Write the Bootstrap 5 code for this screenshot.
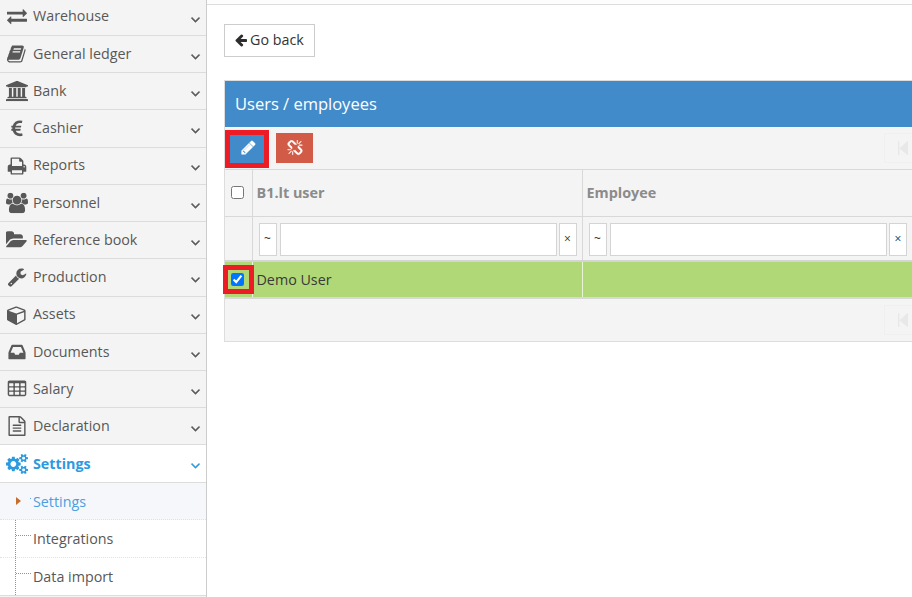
<!DOCTYPE html>
<html lang="en">
<head>
<meta charset="utf-8">
<title>Users / employees</title>
<link href="https://cdn.jsdelivr.net/npm/bootstrap@5.3.0/dist/css/bootstrap.min.css" rel="stylesheet">
<style>
html,body{height:597px;overflow:hidden}
body{font-family:"Open Sans",sans-serif;font-size:14.3px;color:#393939;background:#fff;line-height:20px}
.shell{height:597px;width:912px;overflow:hidden}
.side{width:207px;flex:none;background:#f4f4f4;border-right:1px solid #ccc;height:597px;overflow:hidden}
.mi{height:37.23px;border-bottom:1px solid #dcdcdc;color:#585858;padding-left:33px;padding-right:3px;padding-bottom:.7px;position:relative}
.mi.first{height:36px;padding-bottom:3px}
.mi>.mico{position:absolute;left:7px;top:50%;transform:translateY(-50%);width:20px;height:20px;fill:#585858}
.mi>.mico.wide{left:5.500px;width:22px;height:21px}
.mi.first>.mico{top:calc(50% - 2px)}
.mi>.chev{width:15px;height:15px;fill:#585858;stroke:#585858;stroke-width:70;margin-top:5px}
.mi.first>.chev{margin-top:7px}
.mi.on{background:#fff;color:#2c9ae0;font-weight:700;padding-bottom:0}
.mi.on>.mico,.mi.on>.chev{fill:#2c9ae0;stroke:#2c9ae0}
.mi.on>.chev{margin-top:4px}
.mi.on>.mico{stroke:none}
.sub{background:#fff;position:relative;border-bottom:1px solid #dcdcdc}
.sub::before{content:"";position:absolute;left:15px;top:0;bottom:0;border-left:1px dotted #5d9fd8}
.si{height:37.5px;padding-left:33px;padding-top:2px;color:#585858;position:relative;border-bottom:1px dotted #e2e2e2}
.si:last-child{border-bottom:0;padding-top:1px}
.si::before{content:"";position:absolute;left:16px;width:15px;top:15px;border-top:1px dotted #5d9fd8}
.si.cur{background:#f5f7fa;color:#4b9fe0}
.si.cur::before{left:30px;width:1px}
.si.cur::after{content:"";position:absolute;left:16px;top:14px;border-left:5px solid #c86c2b;border-top:4.500px solid transparent;border-bottom:4.500px solid transparent}
.pane{min-width:0;overflow:hidden}
.topline{height:5px;border-bottom:1px solid #ddd;background:#fdfdfd}
.backbtn{margin:19px 0 23px 17px;width:91px;height:33px;border:1px solid #ccc;border-radius:0;padding:0 0 2px 9px;font-size:14.3px;color:#333;background:#fff;font-family:inherit;text-align:left}
.backbtn svg{width:14px;height:14px;fill:#2d2d2d;margin:-2px 2px 0 0}
.grid-panel{margin-left:17px;width:700px;border:1px solid #ddd;background:#f4f4f4}
.ptitle{background:#428bca;height:46px;line-height:46px;color:#fff;font-size:16.500px;padding-left:10px;width:688px}
.tools{height:43px;width:688px;border-bottom:1px solid #d8d8d8;padding-left:5px;gap:12px}
.tb{width:34px;height:28px;border:0;border-radius:0;padding:0;margin-top:8px}
.tb svg{width:16px;height:16px;fill:#fff;stroke:#fff;stroke-width:50}
.tb-edit{background:#428bca;outline:5px solid #ed1c24}
.tb-edit svg{transform:translate(1.500px,-1.500px)}
.tb-unlink{background:#d15b47;width:37px;height:30px;margin-top:6px;margin-left:0}
.pg{width:29px;height:30px;border:1px solid #f0f0f0;margin-left:auto;padding-left:13px}
.tools .pg{margin-top:6px}
.pg svg{width:10px;height:14px;fill:#e8e8e8;margin-top:7px;display:block}
.grid-table{table-layout:fixed;width:688px;margin:0;border-collapse:collapse;--bs-table-bg:transparent}
.grid-table td,.grid-table th{border:0 solid #d8d8d8;border-right-width:1px;border-bottom-width:1px;padding:0;box-shadow:none;background:transparent;vertical-align:middle}
.grid-table th{color:#8b8b8b;font-weight:700;font-size:14.4px;padding-left:4px;height:46px;padding-right:0}
.grid-table .ck{padding:0;text-align:center}
.grid-table input[type=checkbox]{display:block;margin:0 0 0 6px;width:13px;height:13px}
.grid-table .fr td{height:45px;border-bottom:2px solid #d4d4d4;padding:2px 5px 0 6px}
.fbox{width:18px;height:33px;flex:none;background:#fff;border:1px solid #d4d4d4;font-size:12px;color:#333;line-height:30px;text-align:center}
.finput{height:33px;border:1px solid #d4d4d4;border-radius:0;padding:0;flex:1 1 0;min-width:0;margin-right:-1px}
.fgap{gap:3px}
.grid-table .dr td{background:#b0d877;height:37px;border-right-color:#e8f3d8;border-bottom:2px solid #d8d8d8;color:#393939;padding-left:4px;font-size:14.3px}
.grid-table .dr td.ck{padding:0;position:relative}
.redmark{position:absolute;left:-2px;top:3px;width:31px;height:29px;border:5px solid #ed1c24;pointer-events:none}
.dr .ck input{position:relative}
.pfoot{height:42px;padding-top:6px;width:688px}
</style>
</head>
<body>
<svg width="0" height="0" class="d-none">
<symbol id="i-ex" viewBox="0 0 1792 1792"><path d="M1792 1184v192q0 13-9.500 22.500t-22.500 9.500h-1376v192q0 13-9.500 22.500t-22.500 9.500q-12 0-24-10l-319-320q-9-9-9-22 0-14 9-23l320-320q9-9 23-9 13 0 22.500 9.500t9.500 22.500v192h1376q13 0 22.500 9.500t9.500 22.500zm0-544q0 14-9 23l-320 320q-9 9-23 9-13 0-22.500-9.500t-9.500-22.500v-192h-1376q-13 0-22.500-9.500t-9.500-22.500v-192q0-13 9.500-22.500t22.500-9.500h1376v-192q0-14 9-23t23-9q12 0 24 10l319 319q9 9 9 23z"/></symbol>
<symbol id="i-book" viewBox="0 0 1792 1792"><path d="M1639 478q40 57 18 129l-275 906q-19 64-76.500 107.500t-122.500 43.500h-923q-77 0-148.500-53.500t-99.500-131.500q-24-67-2-127 0-4 3-27t4-37q1-8-3-21.500t-3-19.500q2-11 8-21t16.500-23.500 16.500-23.500q23-38 45-91.500t30-91.500q3-10 .5-30t-.5-28q3-11 17-28t17-23q21-36 42-92t25-90q1-9-2.500-32t.5-28q4-13 22-30.500t22-22.500q19-26 42.500-84.500t27.500-96.500q1-8-3-25.500t-2-26.500q2-8 9-18t18-23 17-21q8-12 16.500-30.500t15-35 16-36 19.500-32 26.500-23.500 36-11.500 47.500 5.500l-1 3q38-9 51-9h761q74 0 114 56t18 130l-274 906q-36 119-71.500 153.500t-128.500 34.500h-869q-27 0-38 15-11 16-1 43 24 70 144 70h923q29 0 56-15.500t35-41.500l300-987q7-22 5-57 38 15 59 43zm-1064 2q-4 13 2 22.500t20 9.500h608q13 0 25.500-9.500t16.500-22.500l21-64q4-13-2-22.500t-20-9.500h-608q-13 0-25.500 9.500t-16.500 22.500zm-83 256q-4 13 2 22.500t20 9.500h608q13 0 25.500-9.500t16.500-22.500l21-64q4-13-2-22.500t-20-9.500h-608q-13 0-25.500 9.500t-16.500 22.500z"/></symbol>
<symbol id="i-bank" viewBox="0 0 1920 1792"><path d="M960 0l960 384v128h-128q0 26-20.500 45t-48.500 19h-1526q-28 0-48.500-19t-20.500-45h-128v-128zm-704 640h256v768h128v-768h256v768h128v-768h256v768h128v-768h256v768h59q28 0 48.500 19t20.500 45v64h-1664v-64q0-26 20.500-45t48.500-19h59v-768zm1595 960q28 0 48.500 19t20.500 45v128h-1920v-128q0-26 20.500-45t48.500-19h1782z"/></symbol>
<symbol id="i-eur" viewBox="0 0 1792 1792"><path d="M1360 1307l35 159q3 12-3 22.500t-17 14.500l-5 1q-4 2-10.500 3.500t-16 4.500-21.500 5.500-25.500 5-30 5-33.500 4.500-36.500 3-38.500 1q-234 0-409-130.500t-238-351.500h-95q-13 0-22.500-9.500t-9.500-22.500v-113q0-13 9.500-22.500t22.500-9.500h66q-2-57 1-105h-67q-14 0-23-9t-9-23v-114q0-14 9-23t23-9h98q67-210 243.500-338t400.500-128q102 0 194 23 11 3 20 15 6 11 3 24l-43 159q-3 13-14 19.500t-24 2.500l-4-1q-4-1-11.500-2.500l-17.500-3.500-22.500-3.500-26-3-29-2.500-29.500-1q-126 0-226 64t-150 176h468q16 0 25 12 10 12 7 26l-24 114q-5 26-32 26h-488q-3 37 0 105h459q15 0 25 12 9 12 6 27l-24 112q-2 11-11 18.500t-20 7.500h-387q48 117 149.500 185.500t228.500 68.500q18 0 36-1.500t33.500-3.500 29.500-4.500 24.500-5 18.500-4.500l12-3 5-2q13-5 26 2 12 7 15 21z"/></symbol>
<symbol id="i-print" viewBox="0 0 1792 1792"><path d="M448 1536h896v-256h-896v256zm0-640h896v-384h-160q-40 0-68-28t-28-68v-160h-640v640zm1152 64q0-26-19-45t-45-19-45 19-19 45 19 45 45 19 45-19 19-45zm128 0v416q0 13-9.500 22.500t-22.500 9.500h-224v160q0 40-28 68t-68 28h-960q-40 0-68-28t-28-68v-160h-224q-13 0-22.500-9.500t-9.500-22.500v-416q0-79 56.500-135.500t135.500-56.500h64v-544q0-40 28-68t68-28h672q40 0 88 20t76 48l152 152q28 28 48 76t20 88v256h64q79 0 135.500 56.500t56.500 135.500z"/></symbol>
<symbol id="i-users" viewBox="0 0 1920 1792"><path d="M593 896q-162 5-265 128h-134q-82 0-138-40.500t-56-118.500q0-353 124-353 6 0 43.500 21t97.500 42.500 119 21.500q67 0 133-23-5 37-5 66 0 139 81 256zm1071 637q0 120-73 189.500t-194 69.500h-874q-121 0-194-69.500t-73-189.500q0-53 3.500-103.500t14-109 26.500-108.500 43-97.500 62-81 85.500-53.500 111.500-20q10 0 43 21.500t73 48 107 48 135 21.500 135-21.500 107-48 73-48 43-21.500q61 0 111.500 20t85.500 53.500 62 81 43 97.500 26.500 108.500 14 109 3.500 103.500zm-1024-1277q0 106-75 181t-181 75-181-75-75-181 75-181 181-75 181 75 75 181zm704 384q0 159-112.500 271.500t-271.500 112.500-271.500-112.500-112.500-271.500 112.500-271.500 271.500-112.500 271.500 112.500 112.500 271.500zm576 225q0 78-56 118.500t-138 40.500h-134q-103-123-265-128 81-117 81-256 0-29-5-66 66 23 133 23 59 0 119-21.500t97.500-42.500 43.500-21q124 0 124 353zm-128-609q0 106-75 181t-181 75-181-75-75-181 75-181 181-75 181 75 75 181z"/></symbol>
<symbol id="i-folder" viewBox="0 0 1920 1792"><path d="M1815 952q0 31-31 66l-336 396q-43 51-120.500 86.500t-143.500 35.500h-1088q-34 0-60.500-13t-26.500-43q0-31 31-66l336-396q43-51 120.500-86.500t143.500-35.500h1088q34 0 60.500 13t26.500 43zm-343-344v160h-832q-94 0-197 47.500t-164 119.500l-337 396-5 6q0-4-.5-12.500t-.5-12.500v-960q0-92 66-158t158-66h320q92 0 158 66t66 158v32h544q92 0 158 66t66 158z"/></symbol>
<symbol id="i-wrench" viewBox="0 0 1792 1792"><path d="M448 1472q0-26-19-45t-45-19-45 19-19 45 19 45 45 19 45-19 19-45zm644-420l-682 682q-37 37-90 37-52 0-91-37l-106-108q-38-36-38-90 0-53 38-91l681-681q39 98 114.500 173.500t173.500 114.500zm634-435q0 39-23 106-47 134-164.500 217.500t-258.500 83.500q-185 0-316.500-131.500t-131.500-316.500 131.500-316.500 316.500-131.500q58 0 121.500 16.500t107.500 46.500q16 11 16 28t-16 28l-293 169v224l193 107q5-3 79-48.500t135.500-81 70.500-35.500q15 0 23.500 10t8.500 25z"/></symbol>
<symbol id="i-cube" viewBox="0 0 1792 1792"><path d="M896 1629l640-349v-636l-640 233v752zm-64-865l698-254-698-254-698 254zm832-252v768q0 35-18 65t-49 47l-704 384q-28 16-61 16t-61-16l-704-384q-31-17-49-47t-18-65v-768q0-40 23-73t61-47l704-256q22-8 44-8t44 8l704 256q38 14 61 47t23 73z"/></symbol>
<symbol id="i-inbox" viewBox="0 0 1792 1792"><path d="M1151 960h316q-1-3-2.500-8.500t-2.500-7.500l-212-496h-708l-212 496q-1 3-2.500 8.500t-2.500 7.500h316l95 192h320zm513 30v482q0 26-19 45t-45 19h-1408q-26 0-45-19t-19-45v-482q0-62 25-123l238-552q10-25 36.500-42t52.500-17h832q26 0 52.500 17t36.500 42l238 552q25 61 25 123z"/></symbol>
<symbol id="i-table" viewBox="0 0 1792 1792"><path d="M576 1376v-192q0-14-9-23t-23-9h-320q-14 0-23 9t-9 23v192q0 14 9 23t23 9h320q14 0 23-9t9-23zm0-384v-192q0-14-9-23t-23-9h-320q-14 0-23 9t-9 23v192q0 14 9 23t23 9h320q14 0 23-9t9-23zm512 384v-192q0-14-9-23t-23-9h-320q-14 0-23 9t-9 23v192q0 14 9 23t23 9h320q14 0 23-9t9-23zm-512-768v-192q0-14-9-23t-23-9h-320q-14 0-23 9t-9 23v192q0 14 9 23t23 9h320q14 0 23-9t9-23zm512 384v-192q0-14-9-23t-23-9h-320q-14 0-23 9t-9 23v192q0 14 9 23t23 9h320q14 0 23-9t9-23zm512 384v-192q0-14-9-23t-23-9h-320q-14 0-23 9t-9 23v192q0 14 9 23t23 9h320q14 0 23-9t9-23zm-512-768v-192q0-14-9-23t-23-9h-320q-14 0-23 9t-9 23v192q0 14 9 23t23 9h320q14 0 23-9t9-23zm512 384v-192q0-14-9-23t-23-9h-320q-14 0-23 9t-9 23v192q0 14 9 23t23 9h320q14 0 23-9t9-23zm0-384v-192q0-14-9-23t-23-9h-320q-14 0-23 9t-9 23v192q0 14 9 23t23 9h320q14 0 23-9t9-23zm128-320v1088q0 66-47 113t-113 47h-1344q-66 0-113-47t-47-113v-1088q0-66 47-113t113-47h1344q66 0 113 47t47 113z"/></symbol>
<symbol id="i-file" viewBox="0 0 1792 1792"><path d="M1596 380q28 28 48 76t20 88v1152q0 40-28 68t-68 28h-1344q-40 0-68-28t-28-68v-1600q0-40 28-68t68-28h896q40 0 88 20t76 48zm-444-244v376h376q-10-29-22-41l-313-313q-12-12-41-22zm384 1528v-1024h-416q-40 0-68-28t-28-68v-416h-768v1536h1280zm-1024-864q0-14 9-23t23-9h704q14 0 23 9t9 23v64q0 14-9 23t-23 9h-704q-14 0-23-9t-9-23v-64zm736 224q14 0 23 9t9 23v64q0 14-9 23t-23 9h-704q-14 0-23-9t-9-23v-64q0-14 9-23t23-9h704zm0 256q14 0 23 9t9 23v64q0 14-9 23t-23 9h-704q-14 0-23-9t-9-23v-64q0-14 9-23t23-9h704z"/></symbol>
<symbol id="i-cogs" viewBox="0 0 1920 1792"><path d="M896 896q0-106-75-181t-181-75-181 75-75 181 75 181 181 75 181-75 75-181zm768 512q0-52-38-90t-90-38-90 38-38 90q0 53 37.500 90.500t90.500 37.500 90.500-37.500 37.500-90.500zm0-1024q0-52-38-90t-90-38-90 38-38 90q0 53 37.500 90.500t90.500 37.500 90.500-37.500 37.500-90.500zm-384 421v185q0 10-7 19.500t-16 10.500l-155 24q-11 35-32 76 34 48 90 115 7 11 7 20 0 12-7 19-23 30-82.500 89.500t-78.500 59.500q-11 0-21-7l-115-90q-37 19-77 31-11 108-23 155-7 24-30 24h-186q-11 0-20-7.500t-10-17.500l-23-153q-34-10-75-31l-118 89q-7 7-20 7-11 0-21-8-144-133-144-160 0-9 7-19 10-14 41-53t47-61q-23-44-35-82l-152-24q-10-1-17-9.500t-7-19.500v-185q0-10 7-19.500t16-10.500l155-24q11-35 32-76-34-48-90-115-7-11-7-20 0-12 7-20 22-30 82-89t79-59q11 0 21 7l115 90q34-18 77-32 11-108 23-154 7-24 30-24h186q11 0 20 7.500t10 17.500l23 153q34 10 75 31l118-89q8-7 20-7 11 0 21 8 144 133 144 160 0 8-7 19-12 16-42 54t-45 60q23 48 34 82l152 23q10 2 17 10.500t7 19.500zm640 533v140q0 16-149 31-12 27-30 52 51 113 51 138 0 4-4 7-122 71-124 71-8 0-46-47t-52-68q-20 2-30 2t-30-2q-14 21-52 68t-46 47q-2 0-124-71-4-3-4-7 0-25 51-138-18-25-30-52-149-15-149-31v-140q0-16 149-31 13-29 30-52-51-113-51-138 0-4 4-7 4-2 35-20t59-34 30-16q8 0 46 46.500t52 67.500q20-2 30-2t30 2q51-71 92-112l6-2q4 0 124 70 4 3 4 7 0 25-51 138 17 23 30 52 149 15 149 31zm0-1024v140q0 16-149 31-12 27-30 52 51 113 51 138 0 4-4 7-122 71-124 71-8 0-46-47t-52-68q-20 2-30 2t-30-2q-14 21-52 68t-46 47q-2 0-124-71-4-3-4-7 0-25 51-138-18-25-30-52-149-15-149-31v-140q0-16 149-31 13-29 30-52-51-113-51-138 0-4 4-7 4-2 35-20t59-34 30-16q8 0 46 46.500t52 67.500q20-2 30-2t30 2q51-71 92-112l6-2q4 0 124 70 4 3 4 7 0 25-51 138 17 23 30 52 149 15 149 31z"/></symbol>
<symbol id="i-chev" viewBox="0 0 1792 1792"><path d="M1395 736q0 13-10 23l-466 466q-10 10-23 10t-23-10l-466-466q-10-10-10-23t10-23l50-50q10-10 23-10t23 10l393 393 393-393q10-10 23-10t23 10l50 50q10 10 10 23z"/></symbol>
<symbol id="i-left" viewBox="0 0 1792 1792"><path d="M1664 896v128q0 53-32.500 90.500t-84.500 37.500h-704l293 294q38 36 38 90t-38 90l-75 76q-37 37-90 37-52 0-91-37l-651-652q-37-37-37-90 0-52 37-91l651-650q38-38 91-38 52 0 90 38l75 74q38 38 38 91t-38 91l-293 293h704q52 0 84.500 37.500t32.500 90.500z"/></symbol>
<symbol id="i-pencil" viewBox="0 0 1792 1792"><path d="M491 1536l91-91-235-235-91 91v107h128v128h107zm523-928q0-22-22-22-10 0-17 7l-542 542q-7 7-7 17 0 22 22 22 10 0 17-7l542-542q7-7 7-17zm-54-192l416 416-832 832h-416v-416zm683 96q0 53-37 90l-166 166-416-416 166-165q36-38 90-38 53 0 91 38l235 234q37 39 37 91z"/></symbol>
<symbol id="i-unlink" viewBox="0 0 1664 1792"><path d="M439 1271l-256 256q-11 9-23 9t-23-9q-9-10-9-23t9-23l256-256q10-9 23-9t23 9q9 10 9 23t-9 23zm169 41v320q0 14-9 23t-23 9-23-9-9-23v-320q0-14 9-23t23-9 23 9 9 23zm-224-224q0 14-9 23t-23 9h-320q-14 0-23-9t-9-23 9-23 23-9h320q14 0 23 9t9 23zm1264 128q0 120-85 203l-147 146q-83 83-203 83-121 0-204-85l-334-335q-21-21-42-56l239-18 273 274q27 27 68 27.500t68-26.500l147-146q28-28 28-67 0-40-28-68l-274-275 18-239q35 21 56 42l336 336q84 86 84 204zm-617-724l-239 18-273-274q-28-28-68-28-39 0-68 27l-147 146q-28 28-28 67 0 40 28 68l274 274-18 240q-35-21-56-42l-336-336q-84-86-84-204 0-120 85-203l147-146q83-83 203-83 121 0 204 85l334 335q21 21 42 56zm633 84q0 14-9 23t-23 9h-320q-14 0-23-9t-9-23 9-23 23-9h320q14 0 23 9t9 23zm-544-544v320q0 14-9 23t-23 9-23-9-9-23v-320q0-14 9-23t23-9 23 9 9 23zm407 151l-256 256q-11 9-23 9t-23-9q-9-10-9-23t9-23l256-256q10-9 23-9t23 9q9 10 9 23t-9 23z"/></symbol>
<symbol id="i-first" viewBox="512 128 896 1536" preserveAspectRatio="none"><path d="M1363 141q19-19 32-13t13 32v1472q0 26-13 32t-32-13l-710-710q-9-9-13-19v710q0 26-19 45t-45 19h-128q-26 0-45-19t-19-45v-1408q0-26 19-45t45-19h128q26 0 45 19t19 45v710q4-10 13-19z"/></symbol>
</svg>
<div class="shell d-flex">
  <nav class="side">
    <div class="mi first d-flex align-items-center justify-content-between"><svg class="mico"><use href="#i-ex"/></svg><span>Warehouse</span><svg class="chev"><use href="#i-chev"/></svg></div>
    <div class="mi d-flex align-items-center justify-content-between"><svg class="mico"><use href="#i-book"/></svg><span>General ledger</span><svg class="chev"><use href="#i-chev"/></svg></div>
    <div class="mi d-flex align-items-center justify-content-between"><svg class="mico wide"><use href="#i-bank"/></svg><span>Bank</span><svg class="chev"><use href="#i-chev"/></svg></div>
    <div class="mi d-flex align-items-center justify-content-between"><svg class="mico"><use href="#i-eur"/></svg><span>Cashier</span><svg class="chev"><use href="#i-chev"/></svg></div>
    <div class="mi d-flex align-items-center justify-content-between"><svg class="mico"><use href="#i-print"/></svg><span>Reports</span><svg class="chev"><use href="#i-chev"/></svg></div>
    <div class="mi d-flex align-items-center justify-content-between"><svg class="mico wide"><use href="#i-users"/></svg><span>Personnel</span><svg class="chev"><use href="#i-chev"/></svg></div>
    <div class="mi d-flex align-items-center justify-content-between"><svg class="mico wide"><use href="#i-folder"/></svg><span>Reference book</span><svg class="chev"><use href="#i-chev"/></svg></div>
    <div class="mi d-flex align-items-center justify-content-between"><svg class="mico"><use href="#i-wrench"/></svg><span>Production</span><svg class="chev"><use href="#i-chev"/></svg></div>
    <div class="mi d-flex align-items-center justify-content-between"><svg class="mico"><use href="#i-cube"/></svg><span>Assets</span><svg class="chev"><use href="#i-chev"/></svg></div>
    <div class="mi d-flex align-items-center justify-content-between"><svg class="mico"><use href="#i-inbox"/></svg><span>Documents</span><svg class="chev"><use href="#i-chev"/></svg></div>
    <div class="mi d-flex align-items-center justify-content-between"><svg class="mico"><use href="#i-table"/></svg><span>Salary</span><svg class="chev"><use href="#i-chev"/></svg></div>
    <div class="mi d-flex align-items-center justify-content-between"><svg class="mico"><use href="#i-file"/></svg><span>Declaration</span><svg class="chev"><use href="#i-chev"/></svg></div>
    <div class="mi on d-flex align-items-center justify-content-between"><svg class="mico wide"><use href="#i-cogs"/></svg><span>Settings</span><svg class="chev"><use href="#i-chev"/></svg></div>
    <div class="sub">
      <div class="si cur d-flex align-items-center">Settings</div>
      <div class="si d-flex align-items-center">Integrations</div>
      <div class="si d-flex align-items-center">Data import</div>
    </div>
  </nav>
  <main class="pane flex-grow-1">
    <div class="topline"></div>
    <button type="button" class="btn backbtn d-block"><svg><use href="#i-left"/></svg>Go back</button>
    <section class="grid-panel">
      <div class="ptitle">Users / employees</div>
      <div class="tools d-flex align-items-start">
        <button type="button" class="btn tb tb-edit d-flex align-items-center justify-content-center"><svg><use href="#i-pencil"/></svg></button>
        <button type="button" class="btn tb tb-unlink d-flex align-items-center justify-content-center"><svg><use href="#i-unlink"/></svg></button>
        <div class="pg"><svg><use href="#i-first"/></svg></div>
      </div>
      <table class="table grid-table">
        <colgroup><col style="width:27px"><col style="width:330px"><col></colgroup>
        <thead>
          <tr><th class="ck"><input type="checkbox" aria-label="Select all"></th><th>B1.lt user</th><th>Employee</th></tr>
        </thead>
        <tbody>
          <tr class="fr">
            <td></td>
            <td><div class="d-flex fgap"><div class="fbox">~</div><input class="finput form-control" type="text" aria-label="B1.lt user"><div class="fbox">×</div></div></td>
            <td><div class="d-flex fgap"><div class="fbox">~</div><input class="finput form-control" type="text" aria-label="Employee"><div class="fbox">×</div></div></td>
          </tr>
          <tr class="dr">
            <td class="ck"><input type="checkbox" checked aria-label="Select Demo User"><span class="redmark"></span></td>
            <td>Demo User</td>
            <td></td>
          </tr>
        </tbody>
      </table>
      <div class="pfoot d-flex"><div class="pg"><svg><use href="#i-first"/></svg></div></div>
    </section>
  </main>
</div>
<script src="https://cdn.jsdelivr.net/npm/bootstrap@5.3.0/dist/js/bootstrap.bundle.min.js"></script>
</body>
</html>
